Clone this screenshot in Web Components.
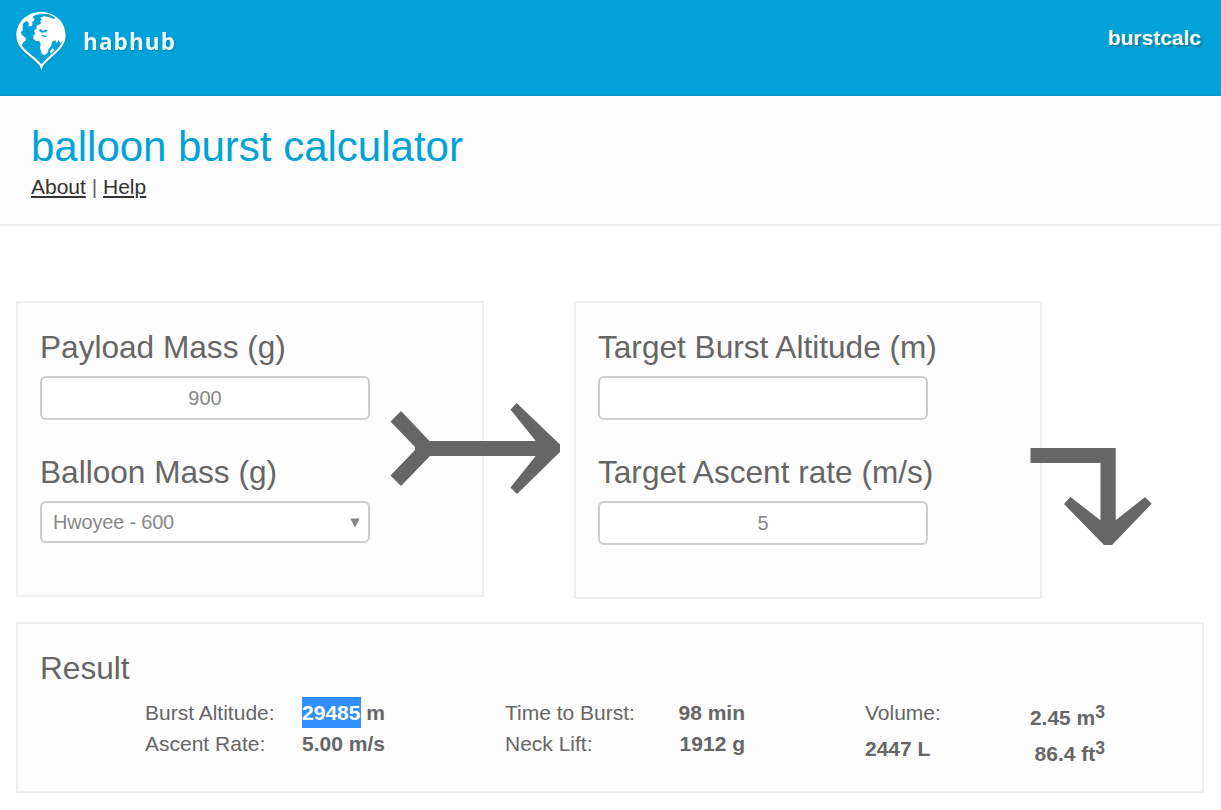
<!DOCTYPE html>
<html lang="en">
<head>
<meta charset="utf-8">
<title>habhub burstcalc</title>
<style>
html,body{margin:0;padding:0}
body{background:#fff;color:#666;font:21px/31px "Liberation Sans",Arial,sans-serif;height:810px;overflow:hidden}
</style>
</head>
<body>
<burst-app></burst-app>
<script>
const define = (name, html) => {
  const t = document.createElement('template');
  t.innerHTML = html;
  customElements.define(name, class extends HTMLElement {
    constructor() {
      super();
      this.attachShadow({mode: 'open'}).append(t.content.cloneNode(true));
    }
  });
};

define('hab-logo', `
<style>
:host{display:flex;align-items:flex-start;color:#fff}
svg{display:block;width:52px;height:60px;filter:drop-shadow(0 1px 1px rgba(0,0,0,.15))}
span{font:bold 22.500px/30px "Open Sans",sans-serif;letter-spacing:1.100px;margin:16px 0 0 16px;opacity:.93;text-shadow:1px 1px 2px rgba(0,0,0,.2)}
</style>
<svg viewBox="-3 0 156 180">
<path fill="#fff" d="M76 178L71 164C58 148 36 134 20 117C8 104 1 90 1 74C1 33 33 3 75 3S149 33 149 74C149 90 142 104 130 117C114 134 94 148 81 164Z"/>
<path fill="#00a3d7" d="M76 160C62 142 40 129 24 112L17 103L22 94L30 88L28 80L18 72L14 64L20 58L20 46L22 36L32 30L38 36L38 46L46 46L50 40L48 34L56 26L50 18L58 12L76 8L98 10L118 20L112 24L98 18L84 16L72 20L78 26L72 30L76 36L68 42L62 44L62 52L54 60L58 68L52 74L52 84L60 90L70 90L74 100L72 112L78 130L86 132L94 126L98 114L106 104L108 92L118 88L122 96L128 88L134 98L140 88C137 98 132 106 125 113C110 129 90 142 76 160Z"/>
<path fill="#00a3d7" d="M68 58L75 54L81 60L87 56L95 58L89 64L76 65ZM76 71L84 73L93 76L89 79L80 76Z"/>
<path fill="#fff" d="M101 122L110 111L115 118L105 127Z"/>
</svg><span>habhub</span>`);

define('site-header', `
<style>
:host{display:flex;justify-content:space-between;box-sizing:border-box;height:96px;padding:11px 20px 0 15px;background:#00a3d7;border-bottom:1px solid #0598c8}
a{color:#fff;font-weight:bold;line-height:30px;margin-top:12px;text-shadow:2px 2px 2px rgba(0,0,0,.25)}
</style><hab-logo></hab-logo><a>burstcalc</a>`);

define('page-title', `
<style>
:host{display:block;box-sizing:border-box;height:130px;padding:27px 31px 0;background:#fcfcfc;border-bottom:2px solid #eee}
h1{margin:0;font-weight:normal;font-size:42px;line-height:48px;color:#00a3d7}
nav{line-height:32px;font-size:21px}
a{color:#333;text-decoration:underline;text-decoration-thickness:2px;text-underline-offset:2px}
</style><h1>balloon burst calculator</h1><nav><a>About</a> | <a>Help</a></nav>`);

define('ui-panel', `
<style>
:host{display:block;box-sizing:border-box;background:#fcfcfc;border:2px solid #eee;padding:22px}
</style><slot></slot>`);

define('form-field', `
<style>
:host{display:block;height:125px}
label{display:block;font-size:31.600px;line-height:44px}
</style><label><slot name="label"></slot></label><slot></slot>`);

define('text-box', `
<style>
:host{display:block;box-sizing:border-box;width:330px;height:44px;margin-top:7px;border:2px solid #ccc;border-radius:6px;background:#fff;color:#888;font-size:20px;line-height:40px;text-align:center}
</style><slot></slot>`);

define('select-box', `
<style>
:host{display:flex;justify-content:space-between;align-items:center;box-sizing:border-box;width:330px;height:42px;margin-top:7px;padding:0 8px 0 11px;border:2px solid #ccc;border-radius:6px;background:#fff;color:#888;font-size:20px;letter-spacing:-.2px;line-height:38px}
svg{display:block;width:10px;height:10px;margin-top:2px}
</style><slot></slot><svg viewBox="0 0 10 10"><path d="M.3 .5H9.700L5 9.500Z" fill="#888"/></svg>`);

define('flow-arrow', `
<style>
:host{position:absolute;display:block}
svg{display:block;overflow:visible}
</style><svg width="1" height="1"><polygon fill="#666"/></svg>`);

define('result-row', `
<style>
:host{display:flex;justify-content:space-between;height:31px}
b{white-space:nowrap}
</style><span><slot></slot></span><b><slot name="value"></slot></b>`);

define('burst-app', `
<style>
:host{display:block}
.forms{position:relative;display:flex;align-items:flex-start;gap:90px;padding:75px 16px 0}
.forms ui-panel{width:468px;height:296px}
.forms ui-panel:nth-of-type(2){height:298px}
.one{left:390px;top:185px}.two{left:1030px;top:222px}
.result{margin:23px 17px 0 16px;height:171px}
.result h2{margin:0;font-weight:normal;font-size:31.600px;line-height:44px}
.cols{display:grid;grid-template-columns:240px 240px 240px;gap:120px;padding:7px 0 0 105px}
mark{display:inline-block;width:59px;margin-right:-.6px;height:31px;line-height:31px;background:#338fff;color:#fff}
sup{font-size:17.500px;line-height:0;position:relative;vertical-align:baseline;top:-7.500px}
.vol result-row{height:36px;line-height:36px}
.up{position:relative;top:-2px}
.v{position:relative;top:3px}
</style>
<site-header></site-header>
<page-title></page-title>
<div class="forms">
<ui-panel>
<form-field><span slot="label">Payload Mass (g)</span><text-box>900</text-box></form-field>
<form-field><span slot="label">Balloon Mass (g)</span><select-box>Hwoyee - 600</select-box></form-field>
</ui-panel>
<ui-panel>
<form-field><span slot="label">Target Burst Altitude (m)</span><text-box></text-box></form-field>
<form-field><span slot="label">Target Ascent rate (m/s)</span><text-box>5</text-box></form-field>
</ui-panel>
<flow-arrow class="one"></flow-arrow>
<flow-arrow class="two"></flow-arrow>
</div>
<ui-panel class="result">
<h2>Result</h2>
<div class="cols">
<div><result-row>Burst Altitude:<span slot="value"><mark>29485</mark> m</span></result-row><result-row>Ascent Rate:<span slot="value">5.00 m/s</span></result-row></div>
<div><result-row>Time to Burst:<span slot="value">98 min</span></result-row><result-row>Neck Lift:<span slot="value">1912 g</span></result-row></div>
<div class="vol"><result-row><span class="up">Volume:</span><span slot="value" class="v">2.45 m<sup>3</sup></span></result-row><result-row><b class="up">2447 L</b><span slot="value" class="v">86.4 ft<sup>3</sup></span></result-row></div>
</div>
</ui-panel>`);

const shapes = {
  one: '11,0 39.500,30 145.700,30 120.500,-1.500 126.700,-8 170,33.500 170,41 127,83 120.500,76.500 145.700,45 40,45 11,75 .5,64.500 25,39 25,36 .5,10.500',
  two: '.5,0 85.700,0 85.700,72.300 115,49 121.700,55.700 82,97 74,97 34,56 40.500,49 70.500,72.300 70.500,15 .5,15'
};
const app = document.querySelector('burst-app').shadowRoot;
for (const [name, points] of Object.entries(shapes))
  app.querySelector('.' + name).shadowRoot.querySelector('polygon').setAttribute('points', points);
</script>
</body>
</html>
